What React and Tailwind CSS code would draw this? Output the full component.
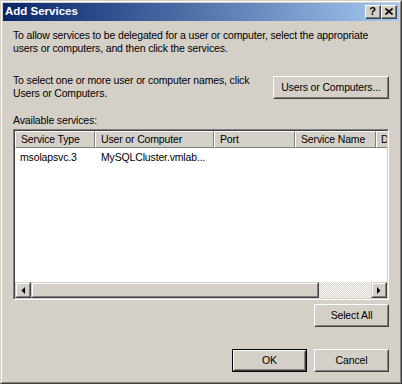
import React from 'react';

const font = "font-['Liberation_Sans',Arial,sans-serif]";

const Btn = ({ children, className = '', isDefault = false }) => (
  <div className={`${isDefault ? 'border border-black' : ''} ${className}`}>
    <div className="h-full border border-t-white border-l-white border-r-[#404040] border-b-[#404040]">
      <div className="h-full flex items-center justify-center border border-t-[#d4d0c8] border-l-[#d4d0c8] border-r-[#808080] border-b-[#808080] text-black">
        {children}
      </div>
    </div>
  </div>
);

const CaptionBtn = ({ children }) => (
  <div className="w-[16px] h-[14px] bg-[#d4d0c8] border border-t-white border-l-white border-r-[#404040] border-b-[#404040]">
    <div className="h-full flex items-center justify-center border-r border-b border-r-[#808080] border-b-[#808080]">
      {children}
    </div>
  </div>
);

const ScrollBtn = ({ dir }) => (
  <div className="w-[16px] h-full bg-[#d4d0c8] border border-t-[#d4d0c8] border-l-[#d4d0c8] border-r-[#404040] border-b-[#404040]">
    <div className="h-full flex items-center justify-center border border-t-white border-l-white border-r-[#808080] border-b-[#808080]">
      <svg width="4" height="7" viewBox="0 0 4 7">
        {dir === 'left' ? <polygon points="4,0 4,7 0.5,3.5" fill="#000" /> : <polygon points="0,0 0,7 3.5,3.5" fill="#000" />}
      </svg>
    </div>
  </div>
);

const columns = [
  { label: 'Service Type', w: 'w-[80px]', pl: 'pl-[5px]' },
  { label: 'User or Computer', w: 'w-[119px]', pl: 'pl-[5px]' },
  { label: 'Port', w: 'w-[81px]', pl: 'pl-[5px]' },
  { label: 'Service Name', w: 'w-[81px]', pl: 'pl-[5px]' },
  { label: 'D', w: 'w-[12px]', pl: 'pl-[4px]' },
];

export default function App() {
  return (
    <div className={`w-[402px] h-[384px] bg-[#d4d0c8] ${font} text-[10.5px] tracking-[-0.15px] text-black border border-t-[#d4d0c8] border-l-[#d4d0c8] border-r-[#404040] border-b-[#404040]`}>
      <div className="h-full border border-t-white border-l-white border-r-[#808080] border-b-[#808080] p-px flex flex-col">
        {/* Title bar */}
        <div className="h-[18px] shrink-0 flex items-center justify-between bg-linear-to-r from-[#0a246a] to-[#a6caf0] pl-[2px] pr-[2px]">
          <span className="text-white font-bold text-[11.5px] tracking-normal leading-none">Add Services</span>
          <div className="flex">
            <CaptionBtn>
              <span className="font-bold text-[11px] leading-none">?</span>
            </CaptionBtn>
            <CaptionBtn>
              <svg width="8" height="7" viewBox="0 0 8 7">
                <path d="M0.5 0.5 L7.5 6.5 M7.5 0.5 L0.5 6.5" stroke="#000" strokeWidth="1.6" />
              </svg>
            </CaptionBtn>
          </div>
        </div>

        {/* Body */}
        <div className="flex-1 flex flex-col px-[10px] leading-[13px]">
          <p className="mt-[8px]">
            To allow services to be delegated for a user or computer, select the appropriate users or computers, and then click the services.
          </p>

          <div className="mt-[18px] flex items-start justify-between">
            <p className="pt-px w-[262px]">
              To select one or more user or computer names, click Users or Computers.
            </p>
            <Btn className="mt-[3px] w-[117px] h-[23px]">Users or Computers...</Btn>
          </div>

          <p className="mt-[14px]">Available services:</p>

          {/* List view */}
          <div className="mt-[2px] h-[171px] border border-t-[#808080] border-l-[#808080] border-r-white border-b-white">
            <div className="h-full flex flex-col bg-white border border-t-[#404040] border-l-[#404040] border-r-[#d4d0c8] border-b-[#d4d0c8] overflow-hidden">
              <div className="h-[17px] shrink-0 flex bg-[#d4d0c8]">
                {columns.map((c) => (
                  <div
                    key={c.label}
                    className={`${c.w} ${c.pl} shrink-0 h-full flex items-center whitespace-nowrap border border-t-white border-l-white border-r-[#808080] border-b-[#808080]`}
                  >
                    {c.label}
                  </div>
                ))}
              </div>
              <div className="flex-1">
                <div className="flex mt-[3px] h-[13px]">
                  <div className="w-[80px] pl-[5px]">msolapsvc.3</div>
                  <div className="w-[119px] pl-[6px]">MySQLCluster.vmlab...</div>
                </div>
              </div>
              {/* Horizontal scrollbar */}
              <div className="h-[16px] shrink-0 flex">
                <ScrollBtn dir="left" />
                <div className="w-[288px] h-full bg-[#d4d0c8] border border-t-[#d4d0c8] border-l-[#d4d0c8] border-r-[#404040] border-b-[#404040]">
                  <div className="h-full border border-t-white border-l-white border-r-[#808080] border-b-[#808080]" />
                </div>
                <div className="flex-1 h-full bg-[repeating-conic-gradient(#ffffff_0_25%,#d4d0c8_0_50%)] bg-[length:2px_2px]" />
                <ScrollBtn dir="right" />
              </div>
            </div>
          </div>

          <div className="mt-[4px] flex justify-end">
            <Btn className="w-[75px] h-[23px]">Select All</Btn>
          </div>

          <div className="mt-[22px] flex justify-end gap-[7px]">
            <Btn isDefault className="w-[75px] h-[23px]">OK</Btn>
            <Btn className="w-[75px] h-[23px]">Cancel</Btn>
          </div>
        </div>
      </div>
    </div>
  );
}
